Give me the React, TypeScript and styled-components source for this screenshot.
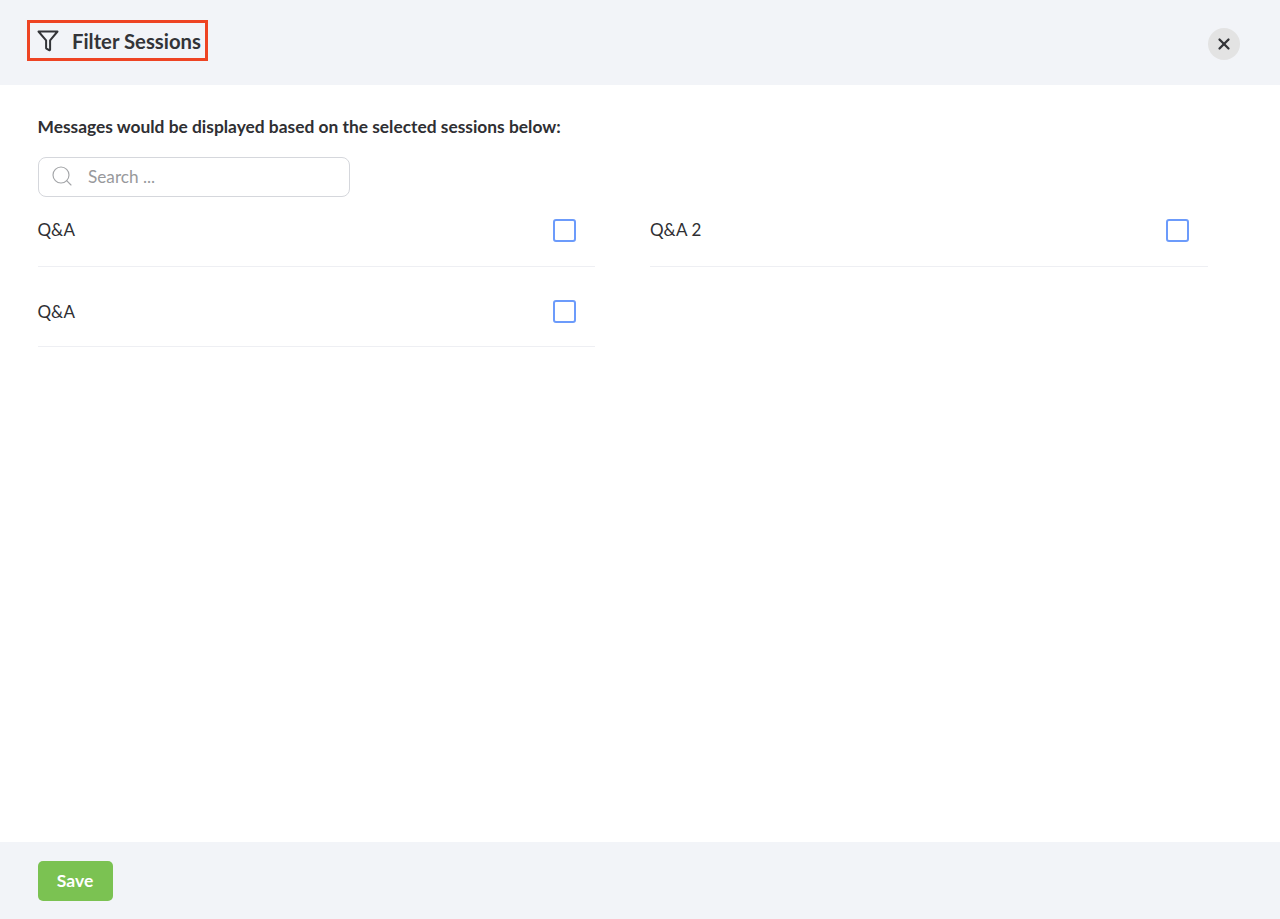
import React from 'react';
import styled, { createGlobalStyle } from 'styled-components';
import { Search, X } from 'lucide-react';

const GlobalStyle = createGlobalStyle`
  html, body {
    margin: 0;
    padding: 0;
    background: #fff;
  }
  * {
    box-sizing: border-box;
  }
`;

const Page = styled.div`
  width: 100%;
  height: 919px;
  display: flex;
  flex-direction: column;
  font-family: Lato, sans-serif;
  color: #2f2f33;
  overflow: hidden;
`;

const Header = styled.header`
  height: 85px;
  flex: none;
  background: #f2f4f8;
  display: flex;
  align-items: flex-start;
  justify-content: space-between;
  padding: 20px 40px 0 27px;
`;

const TitleBox = styled.div`
  width: 181px;
  height: 41px;
  border: 3px solid #ee4423;
  display: flex;
  align-items: center;
  gap: 13.5px;
  padding-left: 6.5px;
`;

const Title = styled.h1`
  margin: 0;
  font-size: 20.3px;
  font-weight: 700;
  line-height: 24px;
  color: #333438;
  white-space: nowrap;
`;

const CloseButton = styled.button`
  width: 32px;
  height: 32px;
  margin-top: 8px;
  padding: 0;
  border: none;
  border-radius: 50%;
  background: #e3e3e3;
  color: #333438;
  display: flex;
  align-items: center;
  justify-content: center;
  cursor: pointer;
`;

const Body = styled.main`
  flex: 1;
  background: #fff;
  padding: 31px 38px 0 37.5px;
`;

const Intro = styled.p`
  margin: 0 0 20px;
  font-size: 17.36px;
  font-weight: 700;
  line-height: 21px;
  color: #2f2f33;
`;

const SearchBox = styled.label`
  width: 312px;
  height: 40px;
  border: 1px solid #d5d7dc;
  border-radius: 8px;
  display: flex;
  align-items: center;
  gap: 14px;
  padding-left: 11.5px;
  color: #a3a5a8;
`;

const SearchGlyph = styled(Search)`
  flex: none;
  margin-top: -3px;
`;

const SearchInput = styled.input`
  flex: 1;
  min-width: 0;
  padding: 0 0 2px;
  border: none;
  outline: none;
  background: transparent;
  font-family: inherit;
  font-size: 17.2px;
  color: #2f2f33;
  &::placeholder {
    color: #98999c;
    opacity: 1;
  }
`;

const SessionGrid = styled.div`
  display: grid;
  grid-template-columns: 557.5px 557.5px;
  column-gap: 55px;
  align-items: start;
`;

const SessionRow = styled.div`
  height: 70px;
  display: flex;
  align-items: flex-start;
  justify-content: space-between;
  padding: 22px 19px 0 0;
  border-bottom: 1px solid #eeeff3;
  &:nth-child(n + 3) {
    height: 80px;
    padding-top: 34px;
  }
`;

const SessionName = styled.span`
  font-size: 17px;
  line-height: 21px;
  color: #2f2f33;
`;

const CheckBox = styled.input.attrs({ type: 'checkbox' })`
  appearance: none;
  width: 23px;
  height: 23px;
  margin: 0;
  border: 2.5px solid #6c9bfb;
  border-radius: 3px;
  background: #fff;
  cursor: pointer;
  ${SessionRow}:nth-child(n + 3) & {
    margin-top: -1px;
  }
`;

const Footer = styled.footer`
  height: 77px;
  flex: none;
  background: #f2f4f8;
  padding: 19px 38px 0 37.5px;
`;

const SaveButton = styled.button`
  width: 75px;
  height: 40px;
  padding: 0 0 2px;
  border: none;
  border-radius: 5px;
  background: #7bc252;
  color: #fff;
  font-family: inherit;
  font-size: 17.5px;
  font-weight: 700;
  cursor: pointer;
`;

const FilterIcon = () => (
  <svg width="22" height="22" viewBox="0 0 22 22" fill="none" stroke="#333438" strokeWidth="2" strokeLinejoin="round" strokeLinecap="round">
    <path d="M1.5 1.5h19l-7.4 8.9v9.2a.7.7 0 0 1-1 .6l-2.6-1.6a.8.8 0 0 1-.4-.7v-7.5z" />
  </svg>
);

const sessions = ['Q&A', 'Q&A 2', 'Q&A'];

export default function App() {
  return (
    <Page>
      <GlobalStyle />
      <Header>
        <TitleBox>
          <FilterIcon />
          <Title>Filter Sessions</Title>
        </TitleBox>
        <CloseButton aria-label="Close">
          <X size={18} strokeWidth={3} />
        </CloseButton>
      </Header>
      <Body>
        <Intro>Messages would be displayed based on the selected sessions below:</Intro>
        <SearchBox>
          <SearchGlyph size={24} strokeWidth={1.15} />
          <SearchInput placeholder="Search ..." />
        </SearchBox>
        <SessionGrid>
          {sessions.map((name, i) => (
            <SessionRow key={i}>
              <SessionName>{name}</SessionName>
              <CheckBox aria-label={name} />
            </SessionRow>
          ))}
        </SessionGrid>
      </Body>
      <Footer>
        <SaveButton>Save</SaveButton>
      </Footer>
    </Page>
  );
}
